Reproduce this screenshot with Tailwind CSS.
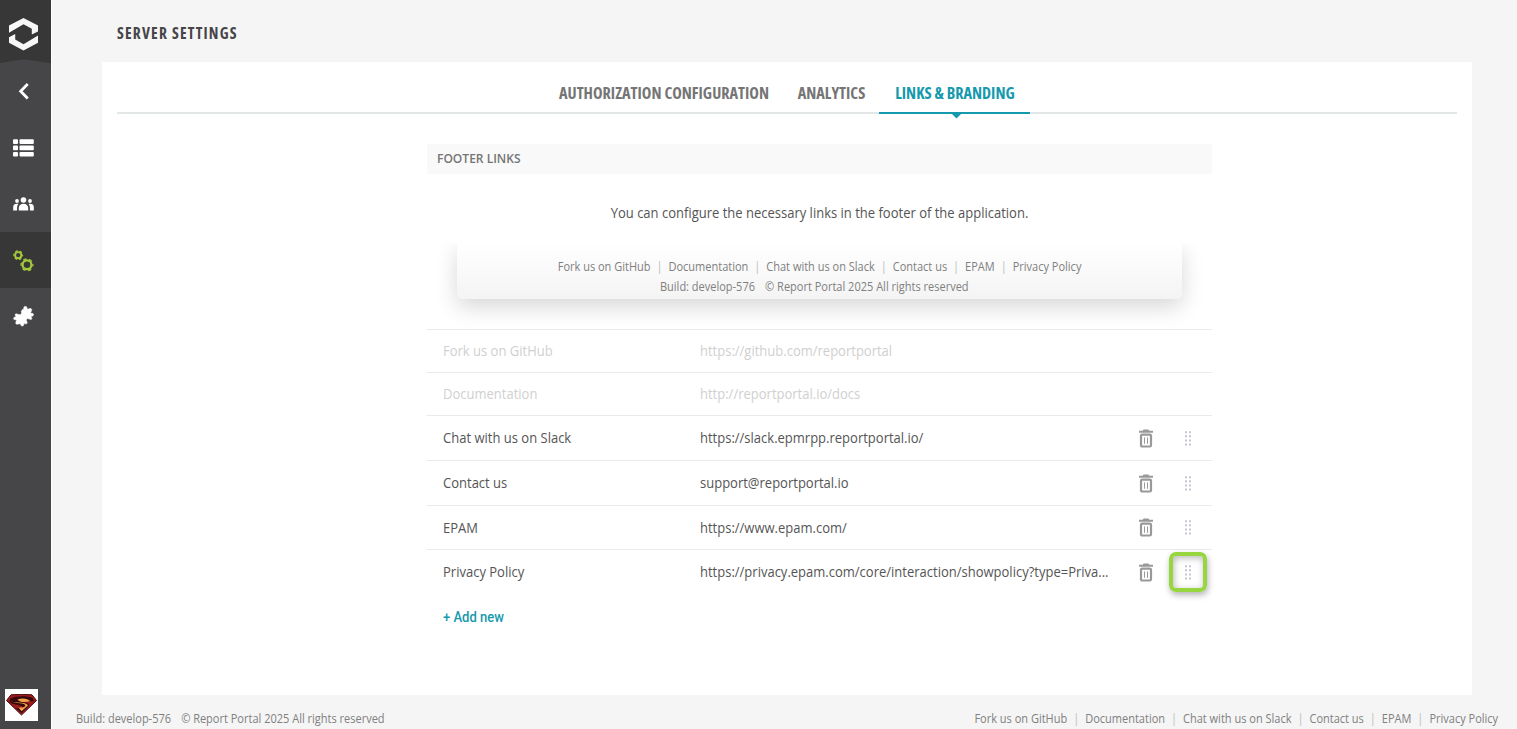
<!DOCTYPE html>
<html lang="en">
<head>
<meta charset="utf-8">
<title>Server settings</title>
<script src="https://cdn.jsdelivr.net/npm/@tailwindcss/browser@4"></script>
</head>
<body class="flex h-[729px] w-[1517px] overflow-hidden bg-[#f5f5f5] font-['Open_Sans',sans-serif]">
<svg class="hidden">
  <symbol id="trash" viewBox="0 0 14 19">
    <path d="M0 1.800h3.600L4.600.600h4.800L10.400 1.800H14v2H0z" fill="#999"/>
    <rect x="2" y="5.600" width="10" height="11.900" rx="1.200" fill="none" stroke="#999" stroke-width="2.200"/>
    <path d="M5.500 8.400v6.400M8.500 8.400v6.400" stroke="#999" stroke-width="1"/>
  </symbol>
  <symbol id="grip" viewBox="0 0 6 15">
    <path d="M0 .2h2v2H0zM4 .2h2v2H4zM0 4.300h2v2H0zM4 4.300h2v2H4zM0 8.400h2v2H0zM4 8.400h2v2H4zM0 12.500h2v2H0zM4 12.500h2v2H4z" fill="#c3c7d3"/>
  </symbol>
</svg>
<aside class="flex w-[51px] shrink-0 flex-col bg-[#464547]">
  <svg class="h-[64px] w-[51px] shrink-0" viewBox="0 0 51 64">
    <path d="M0 0h51v63.300L23.500 59.300 0 63z" fill="#383737"/>
    <path d="M9 32.800V25.500L23.500 18 38 25.500V31.500L31.800 34.600V28.800L23.500 24.300z" fill="#f7f7f7"/>
    <path d="M38 35.500V42.800L23.500 50.500 9 42.800V37.200L15.200 34V39.400L23.500 44.200z" fill="#f7f7f7"/>
  </svg>
  <div class="flex h-[54px] w-[47px] items-center justify-center">
    <svg class="size-5" viewBox="0 0 20 20"><path d="M13.700 3L6.700 10.200l7 7.200" fill="none" stroke="#fff" stroke-width="2.800"/></svg>
  </div>
  <div class="mt-[2px] flex h-[56px] w-[47px] items-center justify-center">
    <svg class="h-[18px] w-[21px]" viewBox="0 0 21 18" fill="#fff"><rect y=".3" width="5" height="4.600" rx="1"/><rect x="6.500" y=".3" width="14.300" height="4.600" rx="1"/><rect y="6.600" width="5" height="4.600" rx="1"/><rect x="6.500" y="6.600" width="14.300" height="4.600" rx="1"/><rect y="12.900" width="5" height="4.600" rx="1"/><rect x="6.500" y="12.900" width="14.300" height="4.600" rx="1"/></svg>
  </div>
  <div class="flex h-[56px] w-[47px] items-center justify-center">
    <svg class="h-[14px] w-[21px]" viewBox="0 0 21 14" fill="#fff"><circle cx="10.500" cy="3" r="2.800"/><circle cx="4" cy="4" r="1.900"/><circle cx="17" cy="4" r="1.900"/><path d="M5.800 13.500V11c0-2.600 2-4.200 4.700-4.200s4.700 1.600 4.700 4.200v2.500zM.2 13.500V10c0-2.200 2-3.600 5.200-3C4.300 8.200 4 9.500 4 13.500zM20.800 13.500V10c0-2.200-2-3.600-5.200-3 1.100 1.200 1.400 2.500 1.400 6.500z"/></svg>
  </div>
  <div class="flex h-[56px] w-[51px] items-center bg-[#383737] pt-[1px] pl-[13px]">
    <svg class="h-[22px] w-[21px]" viewBox="0 0 21 22" fill="none" stroke="#a3c93c">
      <circle cx="5.200" cy="5.200" r="3.100" stroke-width="1.900"/><circle cx="5.200" cy="5.200" r="4.300" stroke-width="1.200" stroke-dasharray="2.500 2.003" stroke-dashoffset="1.250"/>
      <circle cx="14" cy="14.800" r="4.400" stroke-width="2.200"/><circle cx="14" cy="14.800" r="5.900" stroke-width="1.300" stroke-dasharray="3.400 2.778" stroke-dashoffset="1.700"/>
    </svg>
  </div>
  <div class="flex h-[56px] w-[47px] items-center justify-center">
    <svg class="size-[21px]" viewBox="0 0 21 21" fill="#fff" stroke="#fff" stroke-width=".5"><path d="M9 4.300C9.300 3.200 10 3.300 10.800 3.200C10.400 1.300 11.200.3 12.300.3C13.500.3 14.300 1.500 14.200 3.200C15.800 3.100 17 2 18.200 2.700C19.300 3.600 18.500 5 17.600 6.600C17.900 7.400 18.400 7.200 19.200 7.300C20.500 7.500 20.900 8.600 20.300 9.500C19.600 10.500 18.500 10 18 10.500C18.200 11.400 19.400 12.300 18.600 13.200C17.700 14 16.200 13 14.500 12.600C13.600 12.700 13.800 13.500 13.400 14C13.200 15.200 15 16.500 13.900 17.600C13 18.300 11.900 17.300 10.900 17.600C10.700 18.400 11 19.500 9.800 20C8.500 20.300 7.700 19.500 7.300 17.800C6 17.500 4.700 18.800 3.200 18C2.100 17 3.200 15.700 3.600 14.200C3 13.400 1.900 14.300.8 13.200C.1 12 1 11 2.600 11.100C3.300 10.500 1.500 9.200 2.400 8.100C3.500 7.200 5.100 8.600 6.800 8.600C8.100 8.300 8.200 7.600 8.600 6.900C8.300 6 7.900 5 9 4.300z"/></svg>
  </div>
  <div class="mt-auto mb-[8px] ml-[5px] flex h-[32px] w-[33px] items-center justify-center bg-white">
    <svg class="h-[22px] w-[31px]" viewBox="0 0 31 22"><path d="M5 .8Q15.500-.2 26 .8L30.500 6.500 15.500 21 .5 6.500z" fill="#9c1b1d" stroke="#4b0c10" stroke-width="1"/><path d="M4.500 4.500C9 2 21 1.500 26.500 4L28 7l-2.500.5C22 5.500 14 5 11.500 6.500 16 8.600 23 8 23 11.500L15.500 19l-6-5c3 .5 7 .4 7.500-.8C16 11 6 11 3.500 7.800z" fill="#35090b"/><path d="M11.500 5.500C15.500 3.600 22 4.300 24 7 19 8.800 14 8.300 11.500 5.500zM5 7.500c3 1.600 11 1 14 3.300 1.200 2-1.800 3-6.500 2.800L15.500 17.200l6.500-5.700C21 8 10.500 9 5 7.500z" fill="#f0a348"/></svg>
  </div>
</aside>

<div class="flex flex-1 flex-col border-l border-white">
  <header class="flex h-[62px] items-center pt-[5px] pl-[65px]">
    <h1 class="text-[15.500px] font-bold tracking-[1.200px] text-[#464547] font-stretch-condensed">SERVER SETTINGS</h1>
  </header>
  <main class="ml-[50px] flex h-[633px] w-[1370px] flex-col bg-white">
    <nav class="mx-[15px] flex h-[52px] border-b-2 border-[#e3e7e8] pl-[427px] text-[16.200px] font-bold whitespace-nowrap text-[#757575] font-stretch-condensed">
      <div class="flex h-[52px] w-[239px] items-center justify-center pt-[10px] pl-[1px]"><span>AUTHORIZATION CONFIGURATION</span></div>
      <div class="flex h-[52px] w-[96px] items-center justify-center pt-[10px] pl-[1px]"><span>ANALYTICS</span></div>
      <div class="relative flex h-[52px] w-[151px] items-center justify-center border-b-2 border-[#1599ad] pt-[12px] pl-[1px] text-[#1599ad]"><span>LINKS &amp; BRANDING</span>
        <svg class="absolute top-[51px] left-[72px] h-[6px] w-[11px]" viewBox="0 0 11 6"><path d="M0 0h11L5.500 5.500z" fill="#1599ad"/></svg>
      </div>
    </nav>
    <section class="mt-[30px] ml-[325px] flex w-[785px] flex-col">
      <h2 class="flex h-[30px] items-center bg-[#f9f9f9] pl-[10px] text-[13px] font-semibold text-[#757575]"><span class="origin-left scale-x-[0.925]">FOOTER LINKS</span></h2>
      <p class="mt-[27px] origin-center scale-x-[0.929] text-center text-[14px] leading-6 text-[#555]">You can configure the necessary links in the footer of the application.</p>
      <div class="mx-[-10px] mt-[18px] h-[86px] overflow-hidden px-[40px]">
        <div class="flex h-[56px] flex-col items-center rounded-b-[6px] bg-linear-to-b from-white to-[#f4f4f4] pt-[14px] text-[12px] leading-5 text-[#808080] shadow-[0_8px_22px_rgba(0,0,0,0.16)]">
          <div class="flex scale-x-[0.917] whitespace-nowrap"><span>Fork us on GitHub</span><i class="w-[19.600px] text-center text-[#bbb] not-italic">|</i><span>Documentation</span><i class="w-[19.600px] text-center text-[#bbb] not-italic">|</i><span>Chat with us on Slack</span><i class="w-[19.600px] text-center text-[#bbb] not-italic">|</i><span>Contact us</span><i class="w-[19.600px] text-center text-[#bbb] not-italic">|</i><span>EPAM</span><i class="w-[19.600px] text-center text-[#bbb] not-italic">|</i><span>Privacy Policy</span></div>
          <div class="mr-[10px] flex scale-x-[0.917] gap-[11px] whitespace-nowrap"><span>Build: develop-576</span><span>© Report Portal 2025 All rights reserved</span></div>
        </div>
      </div>
      <div class="flex flex-col text-[14px] whitespace-nowrap text-[#555]">
        <div class="flex h-[43px] items-center border-t border-[#eaeaea] pb-[1px] pl-[16px] text-[#d0d0d0]"><span class="w-[257px] origin-left scale-x-[0.929]">Fork us on GitHub</span><span class="origin-left scale-x-[0.929]">https://github.com/reportportal</span></div>
        <div class="flex h-[43px] items-center border-t border-[#eaeaea] pb-[1px] pl-[16px] text-[#d0d0d0]"><span class="w-[257px] origin-left scale-x-[0.929]">Documentation</span><span class="origin-left scale-x-[0.929]">http://reportportal.io/docs</span></div>
        <div class="flex h-[45px] items-center border-t border-[#eaeaea] pl-[16px]"><span class="w-[257px] origin-left scale-x-[0.929] pb-[2px]">Chat with us on Slack</span><span class="w-[439px] origin-left scale-x-[0.929] pb-[2px]">https://slack.epmrpp.reportportal.io/</span><svg class="h-[19px] w-[14px]"><use href="#trash"/></svg><svg class="ml-[32px] h-[15px] w-[6px]"><use href="#grip"/></svg></div>
        <div class="flex h-[45px] items-center border-t border-[#eaeaea] pl-[16px]"><span class="w-[257px] origin-left scale-x-[0.929] pb-[2px]">Contact us</span><span class="w-[439px] origin-left scale-x-[0.929] pb-[2px]">support@reportportal.io</span><svg class="h-[19px] w-[14px]"><use href="#trash"/></svg><svg class="ml-[32px] h-[15px] w-[6px]"><use href="#grip"/></svg></div>
        <div class="flex h-[44px] items-center border-t border-[#eaeaea] pl-[16px]"><span class="w-[257px] origin-left scale-x-[0.929] pb-[1px]">EPAM</span><span class="w-[439px] origin-left scale-x-[0.929] pb-[1px]">https://www.epam.com/</span><svg class="h-[19px] w-[14px]"><use href="#trash"/></svg><svg class="ml-[32px] h-[15px] w-[6px]"><use href="#grip"/></svg></div>
        <div class="flex h-[45px] items-center border-t border-[#eaeaea] pl-[16px]"><span class="w-[257px] origin-left scale-x-[0.929] pb-[2px]">Privacy Policy</span><span class="w-[439px] origin-left scale-x-[0.929] pb-[2px]">https://privacy.epam.com/core/interaction/showpolicy?type=Priva...</span><svg class="h-[19px] w-[14px]"><use href="#trash"/></svg>
          <div class="ml-[16px] flex h-[40px] w-[38px] shrink-0 items-center justify-center rounded-[7px] border-4 border-[#97d63f] shadow-[1px_3px_6px_rgba(0,0,0,0.3),inset_1px_2px_7px_rgba(0,0,0,0.28)]"><svg class="h-[15px] w-[6px]"><use href="#grip"/></svg></div>
        </div>
        <a class="flex h-[45px] items-center pt-[1px] pl-[16px] font-['Roboto',sans-serif] text-[14px] font-medium text-[#1599ad]"><span class="origin-left scale-x-[0.93]">+ Add new</span></a>
      </div>
    </section>
  </main>
  <footer class="flex justify-between pt-[14px] pr-[19px] pl-[24px] text-[12px] leading-5 whitespace-nowrap text-[#808080]">
    <div class="flex origin-left scale-x-[0.917] gap-[11px]"><span>Build: develop-576</span><span>© Report Portal 2025 All rights reserved</span></div>
    <div class="flex origin-right scale-x-[0.917]"><span>Fork us on GitHub</span><i class="w-[19.600px] text-center text-[#bbb] not-italic">|</i><span>Documentation</span><i class="w-[19.600px] text-center text-[#bbb] not-italic">|</i><span>Chat with us on Slack</span><i class="w-[19.600px] text-center text-[#bbb] not-italic">|</i><span>Contact us</span><i class="w-[19.600px] text-center text-[#bbb] not-italic">|</i><span>EPAM</span><i class="w-[19.600px] text-center text-[#bbb] not-italic">|</i><span>Privacy Policy</span></div>
  </footer>
</div>
</body>
</html>
